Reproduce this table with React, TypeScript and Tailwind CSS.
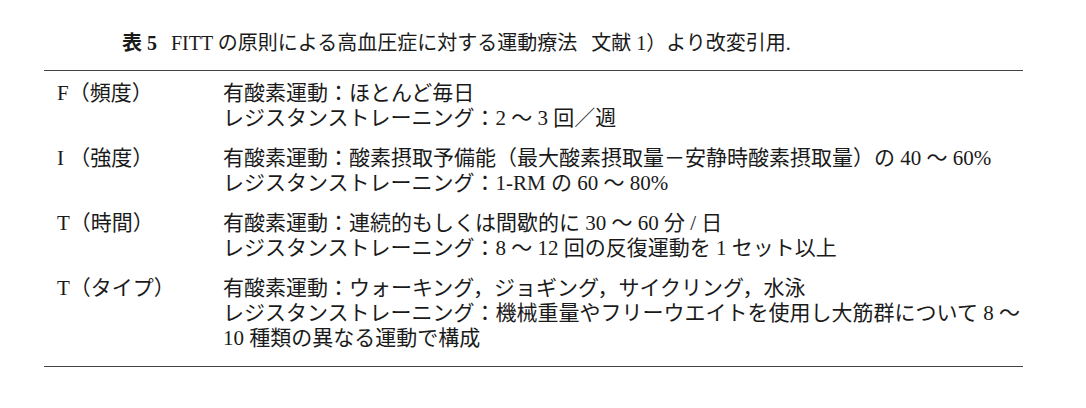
import React from "react";

type Row = {
  label: string;
  lines: string[];
};

const rows: Row[] = [
  {
    label: "F（頻度）",
    lines: ["有酸素運動：ほとんど毎日", "レジスタンストレーニング：2 ～ 3 回／週"],
  },
  {
    label: "I （強度）",
    lines: [
      "有酸素運動：酸素摂取予備能（最大酸素摂取量－安静時酸素摂取量）の 40 ～ 60%",
      "レジスタンストレーニング：1-RM の 60 ～ 80%",
    ],
  },
  {
    label: "T（時間）",
    lines: [
      "有酸素運動：連続的もしくは間歇的に 30 ～ 60 分 / 日",
      "レジスタンストレーニング：8 ～ 12 回の反復運動を 1 セット以上",
    ],
  },
  {
    label: "T（タイプ）",
    lines: [
      "有酸素運動：ウォーキング，ジョギング，サイクリング，水泳",
      "レジスタンストレーニング：機械重量やフリーウエイトを使用し大筋群について 8 ～",
      "10 種類の異なる運動で構成",
    ],
  },
];

const App = () => {
  return (
    <div
      className="w-[1086px] h-[408px] bg-white text-[#1a1a1a] pt-[31px] pl-[44px]"
      style={{ fontFamily: '"Liberation Serif", "Noto Sans CJK JP", serif' }}
    >
      <div className="w-[979px]">
        {/* Title */}
        <div className="flex pl-[78px] text-[20px] leading-[25px] whitespace-pre">
          <span className="font-bold">表 5</span>
          <span className="ml-[14px]">FITT の原則による高血圧症に対する運動療法</span>
          <span className="ml-[14px]">文献 1）より改変引用.</span>
        </div>

        {/* Table */}
        <div className="mt-[14px] border-t-[1.5px] border-b-[1.5px] border-[#444] pt-[10px] pb-[15px]">
          {rows.map((row, i) => (
            <div key={i} className="grid grid-cols-[179px_1fr] mb-[15px] last:mb-0 text-[21px] leading-[25px]">
              <div className="pl-[13px] whitespace-pre">{row.label}</div>
              <div className="whitespace-pre">
                {row.lines.map((l, j) => (
                  <div key={j}>{l}</div>
                ))}
              </div>
            </div>
          ))}
        </div>
      </div>
    </div>
  );
};

export default App;
